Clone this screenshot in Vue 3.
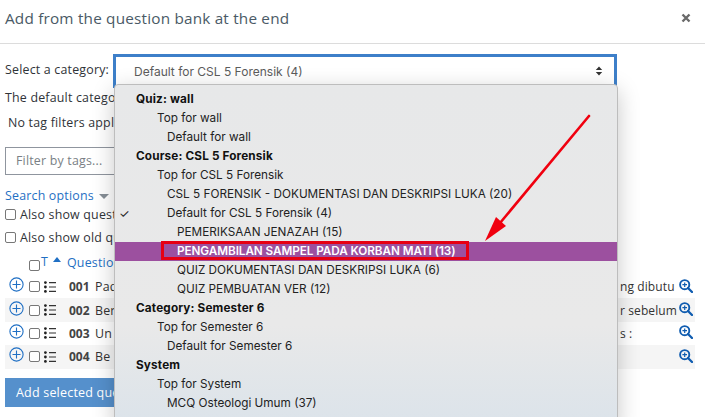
<script setup>
const rows = [
  { no: '001', text: 'Pad', tail: 'ng dibutu', odd: false },
  { no: '002', text: 'Ber', tail: 'r sebelum', odd: true },
  { no: '003', text: 'Un', tail: 's :', odd: false },
  { no: '004', text: 'Be', tail: '', odd: true },
]
const menu = [
  { t: 'Quiz: wall', c: 'head' },
  { t: 'Top for wall', c: 'l1' },
  { t: 'Default for wall', c: 'l2' },
  { t: 'Course: CSL 5 Forensik', c: 'head' },
  { t: 'Top for CSL 5 Forensik', c: 'l1' },
  { t: 'CSL 5 FORENSIK - DOKUMENTASI DAN DESKRIPSI LUKA (20)', c: 'l2' },
  { t: 'Default for CSL 5 Forensik (4)', c: 'l2', check: true },
  { t: 'PEMERIKSAAN JENAZAH (15)', c: 'l3' },
  { t: 'PENGAMBILAN SAMPEL PADA KORBAN MATI (13)', c: 'l3 active' },
  { t: 'QUIZ DOKUMENTASI DAN DESKRIPSI LUKA (6)', c: 'l3' },
  { t: 'QUIZ PEMBUATAN VER (12)', c: 'l3' },
  { t: 'Category: Semester 6', c: 'head' },
  { t: 'Top for Semester 6', c: 'l1' },
  { t: 'Default for Semester 6', c: 'l2' },
  { t: 'System', c: 'head' },
  { t: 'Top for System', c: 'l1' },
  { t: 'MCQ Osteologi Umum (37)', c: 'l2' },
]
</script>

<template>
  <div class="dialog">
    <header class="head-bar">
      <h1>Add from the question bank at the end</h1>
      <svg class="close" width="10" height="10" viewBox="0 0 10 10"><path d="M1.5 1.5l7 7M8.5 1.5l-7 7" stroke="#6a6a6a" stroke-width="2.4" fill="none"/></svg>
    </header>

    <main class="body">
      <div class="select-row">
        <label>Select a category:</label>
        <div class="select">
          <span>Default for CSL 5 Forensik (4)</span>
          <svg width="8" height="10" viewBox="0 0 8 10"><path d="M4 .5l3.2 3.6H.8zM4 9.5L.8 5.9h6.4z" fill="#333"/></svg>
        </div>
      </div>
      <p class="line default">The default catego</p>
      <p class="line notag">No tag filters appli</p>
      <div class="filter">Filter by tags...</div>
      <div class="search"><a>Search options</a><i class="caret"></i></div>
      <label class="check first"><i class="box"></i>Also show quest</label>
      <label class="check second"><i class="box"></i>Also show old qu</label>

      <div class="thead">
        <i class="box"></i>
        <span class="t">T</span><i class="up"></i>
        <a>Questio</a>
      </div>
      <div v-for="r in rows" :key="r.no" class="row" :class="{ odd: r.odd }">
        <svg class="plus" width="15" height="15" viewBox="0 0 15 15"><circle cx="7.5" cy="7.5" r="6.6" fill="none" stroke="#1f6fc4" stroke-width="1.1"/><path d="M7.5 3.5v8M3.5 7.5h8" stroke="#1f6fc4" stroke-width="1.1"/></svg>
        <i class="box"></i>
        <svg class="list" width="12" height="12" viewBox="0 0 12 12"><g fill="#222"><circle cx="1.4" cy="1.6" r="1.4"/><circle cx="1.4" cy="6" r="1.4"/><circle cx="1.4" cy="10.4" r="1.4"/></g><path d="M5 1.6h7M5 6h7M5 10.4h7" stroke="#333" stroke-width="1.1"/></svg>
        <b>{{ r.no }}</b>
        <span class="txt">{{ r.text }}</span>
        <span class="tail">{{ r.tail }}</span>
        <svg class="zoom" width="14" height="14" viewBox="0 0 14 14"><circle cx="5.7" cy="5.7" r="4.6" fill="none" stroke="#0f5cb0" stroke-width="1.9"/><path d="M9 9l4 4" stroke="#0f5cb0" stroke-width="2.3" stroke-linecap="round"/><path d="M5.7 3.4v4.6M3.4 5.7H8" stroke="#0f5cb0" stroke-width="1.2"/></svg>
      </div>
      <button class="add">Add selected questions</button>
    </main>

    <ul class="menu">
      <li v-for="m in menu" :key="m.t" :class="m.c">
        <span v-if="m.check" class="tick">✓</span><span>{{ m.t }}</span>
      </li>
    </ul>

    <div class="redbox"></div>
    <svg class="arrow" width="705" height="417" viewBox="0 0 705 417">
      <path d="M589 116L500 223" stroke="#f0000f" stroke-width="2.6" stroke-linecap="round" fill="none"/>
      <path d="M485 241L496 217L506 226Z" fill="#f0000f"/>
    </svg>
  </div>
</template>

<style>
body { margin: 0; background: #fff; }
</style>

<style scoped>
.dialog {
  position: relative;
  width: 705px;
  height: 417px;
  overflow: hidden;
  background: #fff;
  color: #2f3338;
  font-family: "Open Sans", sans-serif;
  font-size: 12.4px;
  letter-spacing: .2px;
}
.head-bar {
  height: 44px;
  box-sizing: border-box;
  border-bottom: 1px solid #dcdcdc;
  display: flex;
  align-items: center;
  justify-content: space-between;
  padding: 0 14px 7px 5px;
}
h1 {
  margin: 0;
  font-size: 15.3px;
  font-weight: 400;
  color: #4a5a66;
  letter-spacing: .2px;
}
.body { padding: 10px 10px 0 5px; }
.select-row { display: flex; align-items: flex-start; gap: 2px; height: 37px; }
.select-row label { line-height: 32px; width: 106px; white-space: nowrap; }
.select {
  flex: 1;
  box-sizing: border-box;
  height: 34px;
  max-width: 504px;
  border: 3px solid #3d7fc9;
  display: flex;
  justify-content: space-between;
  align-items: flex-start;
  padding: 7px 11px 0 18px;
  font-family: Inter, sans-serif;
  font-size: 12px;
  letter-spacing: 0;
  color: #5c5c5c;
}
.select svg { margin-top: 2px; }
.line { margin: 0; white-space: nowrap; }
.default { line-height: 20px; margin-top: -3px; }
.notag { line-height: 20px; margin: 5px 0 0 3px; }
.filter {
  margin-top: 14px;
  height: 28px;
  width: 200px;
  box-sizing: border-box;
  border: 1px solid #8f959e;
  padding: 0 10px;
  line-height: 26px;
  color: #7a7f85;
}
.search { margin-top: 12px; height: 18px; line-height: 18px; display: flex; align-items: center; gap: 5px; color: #1f6fc4; }
.caret { width: 0; height: 0; border: 5px solid transparent; border-top: 5px solid #868e96; border-bottom: 0; }
.check { display: flex; align-items: center; gap: 4px; height: 18px; white-space: nowrap; }
.first { margin-top: 0; }
.second { margin-top: 5px; }
.box {
  display: inline-block;
  width: 11px;
  height: 11px;
  box-sizing: border-box;
  flex: none;
  border: 1px solid #777;
  border-radius: 2px;
  background: #fff;
}
.thead { margin-top: 4px; height: 25px; display: flex; align-items: center; color: #1f6fc4; padding-left: 24px; }
.thead .box { margin-top: 5px; }
.t { margin-left: 1px; margin-top: -3px; }
.up { width: 0; height: 0; border: 4px solid transparent; border-bottom: 5px solid #1f6fc4; border-top: 0; margin: -7px 0 0 5px; }
.thead a { margin-left: 6px; margin-top: -1px; }
.row {
  display: flex;
  align-items: center;
  height: 23.4px;
  width: 690px;
  color: #333;
}
.odd { background: #f5f5f5; }
.plus { margin: -4px 0 0 4px; flex: none; }
.row .box { margin-left: 5px; }
.list { margin-left: 4px; flex: none; }
.row b { margin-left: 13px; width: 20px; font-size: 12px; letter-spacing: 0; color: #444; }
.txt { margin-left: 6px; flex: 0 0 525px; }
.tail { white-space: nowrap; font-size: 12px; letter-spacing: .1px; }
.zoom { margin-left: auto; margin-right: 2px; margin-top: -2px; flex: none; }
.add {
  display: block;
  margin-top: 9px;
  height: 29px;
  width: 200px;
  border: 0;
  background: #5590cc;
  color: #fff;
  text-align: left;
  padding: 0 0 0 11px;
  font: 12.5px "Open Sans", sans-serif;
  letter-spacing: .2px;
}
.menu {
  position: absolute;
  left: 114px;
  top: 84px;
  width: 504px;
  height: 345px;
  margin: 0;
  padding: 4.5px 0 0;
  box-sizing: border-box;
  list-style: none;
  background: linear-gradient(#e7e8e9, #e9e9e9 70%, #dbe3ea);
  border: 1px solid #bdbdbd;
  border-radius: 4px;
  box-shadow: 0 6px 22px rgba(0,0,0,.22);
  font-family: Inter, sans-serif;
  font-size: 11.75px;
  letter-spacing: 0;
  color: #222;
}
.menu li { height: 19px; line-height: 19px; white-space: nowrap; position: relative; }
.head { padding-left: 21px; font-weight: 700; color: #111; letter-spacing: .15px; }
.l1 { padding-left: 42px; }
.l2 { padding-left: 52px; }
.l3 { padding-left: 62px; }
.active { background: #9c509f; color: #fff; font-weight: 600; letter-spacing: -.08px; }
.tick { position: absolute; left: 4px; top: 0; font-size: 12px; }
.redbox {
  position: absolute;
  left: 161px;
  top: 241px;
  width: 308px;
  height: 19px;
  box-sizing: border-box;
  border: 3px solid #e60012;
}
.arrow { position: absolute; left: 0; top: 0; pointer-events: none; }
</style>
